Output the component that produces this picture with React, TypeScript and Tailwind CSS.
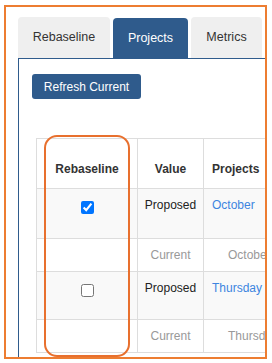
import React from 'react';

const rows = [
  { checked: true, kind: 'Proposed', project: 'October' },
  { kind: 'Current', project: 'October' },
  { checked: false, kind: 'Proposed', project: 'Thursday Meeting' },
  { kind: 'Current', project: 'Thursday Meeting' },
];

const App: React.FC = () => {
  return (
    <div className="w-[272px] h-[363px] bg-white overflow-hidden font-['Liberation_Sans',Arial,sans-serif] text-[12px] text-[#333]">
      <div className="relative ml-[4px] mt-[5px] w-[263px] h-[354px] border-2 border-[#ed7d31] overflow-hidden pl-[12px] pt-[10px]">
        {/* tabs */}
        <div className="flex items-end gap-[3px] h-[41px]">
          <div className="w-[92px] h-[41px] rounded-t-[4px] bg-[#efefef] flex items-center justify-center text-[#333] text-[12.5px]">
            Rebaseline
          </div>
          <div className="w-[75px] h-[40px] rounded-t-[4px] bg-[#2f5b8c] flex items-center justify-center text-white text-[12.5px]">
            Projects
          </div>
          <div className="w-[71px] h-[41px] rounded-t-[4px] bg-[#efefef] flex items-center justify-center text-[#333] text-[12.5px]">
            Metrics
          </div>
        </div>

        {/* panel */}
        <div className="border-l border-t border-[#2f5b8c] pl-[13px] pt-[15px] h-[400px] w-[400px]">
          <button className="w-[109px] h-[25px] rounded-[3px] bg-[#2f5b8c] text-white text-[12px] flex items-center justify-center">
            Refresh Current
          </button>

          <table className="ml-[4px] mt-[39px] border-collapse table-fixed w-[260px]">
            <colgroup>
              <col className="w-[101px]" />
              <col className="w-[66px]" />
              <col className="w-[93px]" />
            </colgroup>
            <thead>
              <tr className="h-[50px]">
                <th className="border border-[#ddd] align-bottom pb-[10px] font-bold text-center">Rebaseline</th>
                <th className="border border-[#ddd] align-bottom pb-[10px] font-bold text-center">Value</th>
                <th className="border border-[#ddd] align-bottom pb-[10px] font-bold text-left pl-[8px] whitespace-nowrap">Projects</th>
              </tr>
            </thead>
            <tbody>
              {rows.map((r, i) =>
                r.kind === 'Proposed' ? (
                  <tr key={i} className={i === 0 ? 'h-[50px] bg-[#f9f9f9]' : 'h-[48px] bg-[#f9f9f9]'}>
                    <td className="border border-[#ddd] align-top text-center pt-[12px]">
                      <input
                        type="checkbox"
                        defaultChecked={r.checked}
                        className="w-[13px] h-[13px] m-0 align-top accent-[#0075ff]"
                      />
                    </td>
                    <td className="border border-[#ddd] align-top text-center pt-[7px] text-[#222]">{r.kind}</td>
                    <td className="border border-[#ddd] align-top pt-[7px] pl-[8px] whitespace-nowrap overflow-hidden text-[#3d85e0]">
                      {r.project}
                    </td>
                  </tr>
                ) : (
                  <tr key={i} className="h-[33px] bg-white">
                    <td className="border border-[#ddd]"></td>
                    <td className="border border-[#ddd] text-center text-[#999]">{r.kind}</td>
                    <td className="border border-[#ddd] pl-[24px] whitespace-nowrap overflow-hidden text-[#999]">
                      {r.project}
                    </td>
                  </tr>
                )
              )}
            </tbody>
          </table>
        </div>

        {/* highlight around the Rebaseline column */}
        <div className="absolute left-[38px] top-[128px] w-[86px] h-[222px] rounded-[13px] border-2 border-[#e8702e] pointer-events-none" />
      </div>
    </div>
  );
};

export default App;
